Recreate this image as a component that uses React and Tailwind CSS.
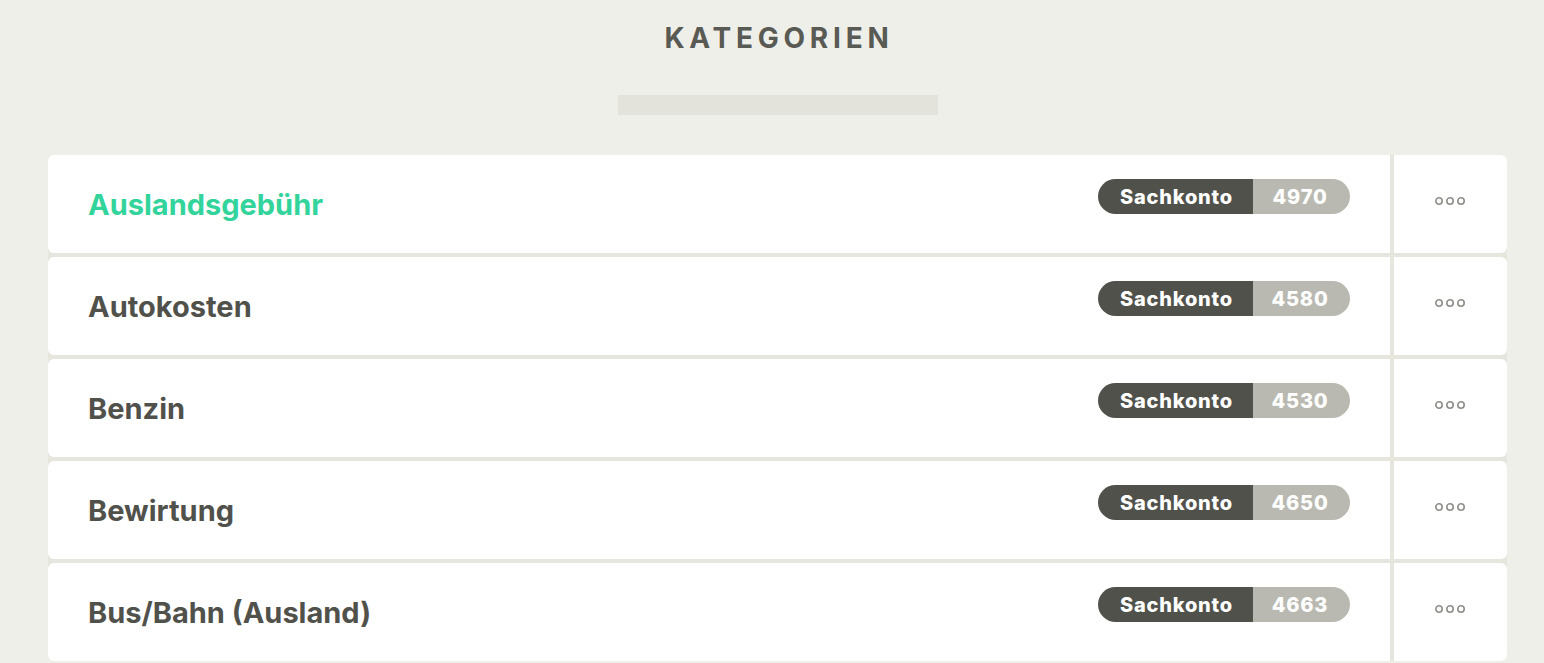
const categories = [
  { name: "Auslandsgebühr", konto: "4970", active: true },
  { name: "Autokosten", konto: "4580" },
  { name: "Benzin", konto: "4530" },
  { name: "Bewirtung", konto: "4650" },
  { name: "Bus/Bahn (Ausland)", konto: "4663" },
];

const Dots = () => (
  <svg width="34" height="10" viewBox="0 0 34 10" fill="none">
    <circle cx="5" cy="5" r="3.2" stroke="#8e8e89" strokeWidth="1.6" />
    <circle cx="16" cy="5" r="3.2" stroke="#8e8e89" strokeWidth="1.6" />
    <circle cx="27" cy="5" r="3.2" stroke="#8e8e89" strokeWidth="1.6" />
  </svg>
);

const CategoryRow = ({ name, konto, active }) => (
  <div className="flex h-[98px] gap-1">
    <div className="flex flex-1 items-center justify-between rounded-l-md bg-white pl-10 pr-10">
      <span
        className={
          "pt-[2px] text-[29px] font-bold " +
          (active ? "text-[#33d49b]" : "text-[#51514c]")
        }
      >
        {name}
      </span>
      <div className="mb-[15px] flex h-[35px] overflow-hidden rounded-full text-[20px] font-extrabold tracking-[0.04em] text-white">
        <span className="flex w-[155px] items-center justify-center bg-[#51514c] pl-[2px]">
          Sachkonto
        </span>
        <span className="flex w-[97px] items-center justify-center bg-[#b9b9b1] pr-[3px]">
          {konto}
        </span>
      </div>
    </div>
    <div className="flex w-[113px] items-center justify-center rounded-r-md bg-white pb-[6px]">
      <Dots />
    </div>
  </div>
);

export default function App() {
  return (
    <div className="min-h-[663px] bg-[#efefea] font-['Inter',sans-serif]">
      <div className="flex flex-col items-center pt-[20px]">
        <h1 className="pl-[14px] text-[28px] font-bold uppercase leading-[36px] tracking-[0.17em] text-[#5a5a55]">
          Kategorien
        </h1>
        <div className="ml-[12px] mt-[39px] h-[20px] w-[320px] bg-[#e3e3dc]" />
      </div>
      <div className="ml-[48px] mt-[40px] flex w-[1459px] flex-col gap-1 rounded-md bg-[#e6e6de]">
        {categories.map((c) => (
          <CategoryRow key={c.konto} {...c} />
        ))}
      </div>
    </div>
  );
}
